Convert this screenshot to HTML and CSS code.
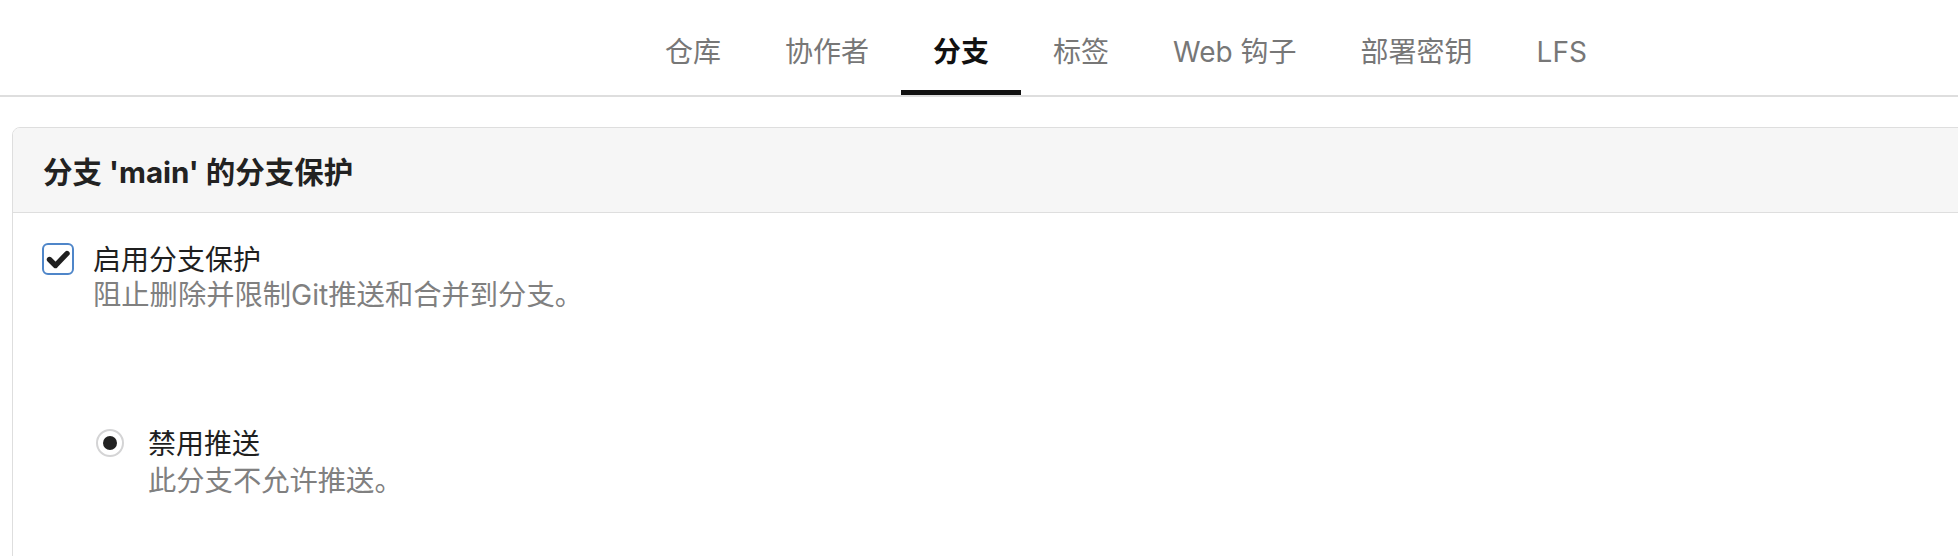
FILE: index.html
```html
<!DOCTYPE html>
<html lang="zh-CN">
<head>
<meta charset="utf-8">
<title>分支保护</title>
<link rel="stylesheet" href="styles.css">
</head>
<body>
<nav class="tabs">
  <a class="tab">仓库</a>
  <a class="tab">协作者</a>
  <a class="tab active">分支</a>
  <a class="tab">标签</a>
  <a class="tab">Web 钩子</a>
  <a class="tab">部署密钥</a>
  <a class="tab">LFS</a>
</nav>
<section class="card">
  <h4 class="card-header">分支 'main' 的分支保护</h4>
  <div class="card-body">
    <div class="field check-field">
      <span class="checkbox">
        <svg viewBox="0 0 32 32" width="32" height="32"><path d="M7.5 16.5l6 6L25 10.5" fill="none" stroke="#1f1f1f" stroke-width="5.4" stroke-linecap="round" stroke-linejoin="round"/></svg>
      </span>
      <div class="field-text">
        <div class="label">启用分支保护</div>
        <div class="help">阻止删除并限制Git推送和合并到分支。</div>
      </div>
    </div>
    <div class="field radio-field">
      <span class="radio"><span class="dot"></span></span>
      <div class="field-text">
        <div class="label">禁用推送</div>
        <div class="help">此分支不允许推送。</div>
      </div>
    </div>
  </div>
</section>
</body>
</html>
```
FILE: styles.css
```css
html, body {
  margin: 0;
  padding: 0;
  background: #fff;
  overflow: hidden;
}
body {
  font-family: Inter, "Noto Sans CJK SC", sans-serif;
  color: #1f1f1f;
  width: 1958px;
}
.tabs {
  display: flex;
  padding-left: 633px;
  border-bottom: 2px solid #dedede;
}
.tab {
  display: block;
  padding: 35px 32px 20px;
  font-size: 28px;
  line-height: 35px;
  color: #777;
  border-bottom: 5px solid transparent;
}
.tab.active {
  color: #111;
  font-weight: 600;
  border-bottom-color: #111;
}
.card {
  margin: 30px -60px 0 12px;
  border: 1px solid #dedede;
  border-radius: 8px;
  overflow: hidden;
  height: 600px;
}
.card-header {
  margin: 0;
  padding: 0 30px;
  height: 84px;
  display: flex;
  align-items: center;
  background: #f6f6f6;
  border-bottom: 1px solid #dedede;
  font-size: 29.5px;
  font-weight: 700;
  color: #222;
}
.card-body {
  padding: 30px 29px;
}
.field {
  display: flex;
  align-items: flex-start;
}
.checkbox {
  flex: none;
  width: 32px;
  height: 32px;
  box-sizing: border-box;
  border: 2px solid #4f86c9;
  border-radius: 6px;
  display: flex;
  align-items: center;
  justify-content: center;
  margin-right: 19px;
}
.checkbox svg {
  display: block;
  margin: -2px;
}
.field-text .label {
  font-size: 28px;
  line-height: 35px;
  color: #1f1f1f;
}
.field-text .help {
  font-size: 28.3px;
  line-height: 35px;
  color: #808080;
}
.radio-field {
  margin-top: 114px;
  margin-left: 54px;
}
.radio {
  flex: none;
  width: 28px;
  height: 28px;
  box-sizing: border-box;
  border: 2px solid #d4d4d5;
  border-radius: 50%;
  display: flex;
  align-items: center;
  justify-content: center;
  margin-top: 2px;
  margin-right: 24px;
}
.radio .dot {
  width: 14px;
  height: 14px;
  border-radius: 50%;
  background: #222;
}
.radio-field .help {
  margin-top: 2px;
}
```
